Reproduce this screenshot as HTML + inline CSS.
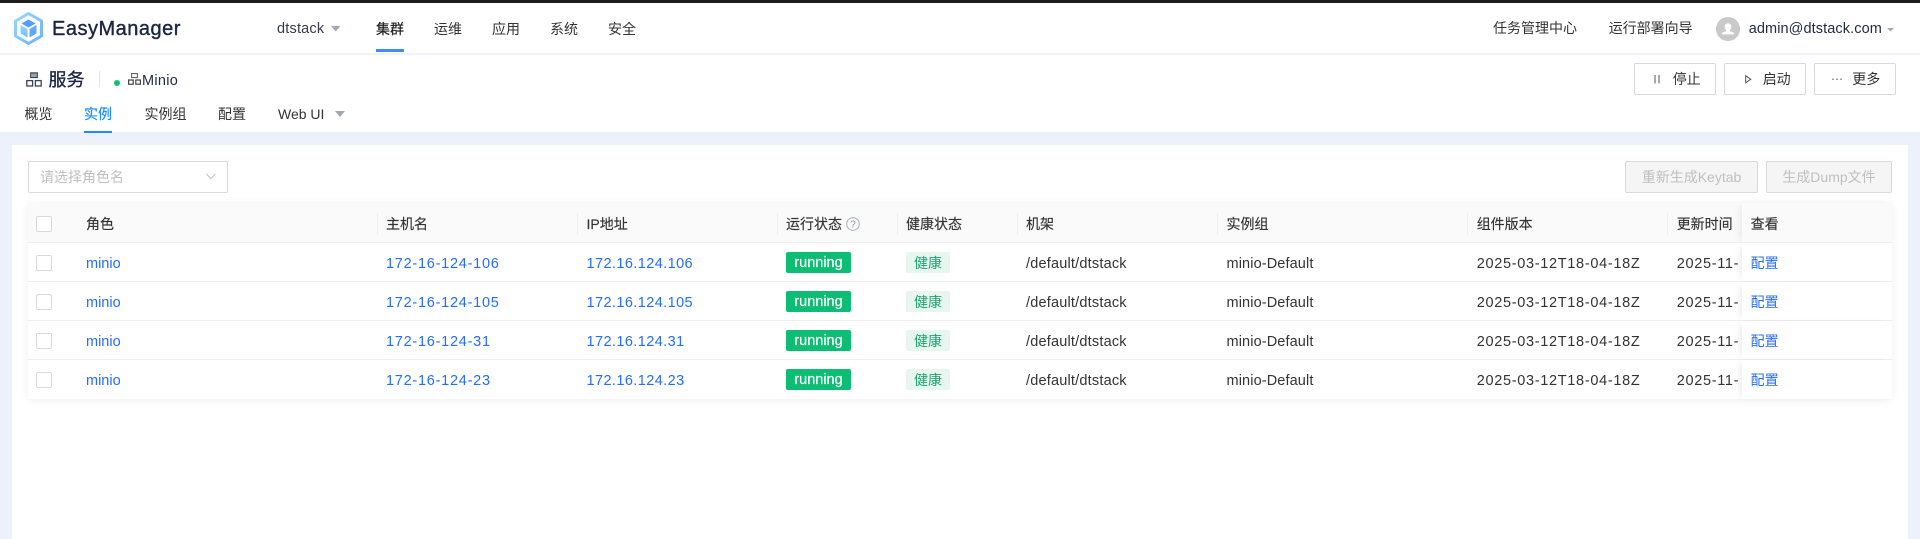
<!DOCTYPE html>
<html lang="zh-CN">
<head>
<meta charset="utf-8">
<title>EasyManager</title>
<style>
*{box-sizing:border-box}
html,body{margin:0;padding:0;width:1920px;height:539px;overflow:hidden;background:#edf1f9;
font-family:"Liberation Sans","Noto Sans CJK SC",sans-serif;font-size:14px;color:#333}
.a{position:absolute;white-space:nowrap}
.t{position:absolute;white-space:nowrap;line-height:20px;height:20px}
svg{position:absolute;display:block;overflow:visible}
.btn{position:absolute;top:63px;width:82px;height:32px;background:#fff;border:1px solid #d9d9d9;border-radius:2px}
.dis{position:absolute;top:161px;height:32px;background:#f5f5f5;border:1px solid #d9d9d9;border-radius:2px;color:#bfbfbf;line-height:30px;text-align:center}
.row{position:absolute;left:28px;width:1864px;height:39px;border-bottom:1px solid #efefef;background:#fff;line-height:40px}
.row>div{position:absolute;top:0;white-space:nowrap}
.row>.lt{top:1px}
.cb{position:absolute;left:8px;width:16px;height:16px;background:#fff;border:1px solid #d9d9d9;border-radius:2px}
.l{color:#246dff}
.role{left:58px;font-size:14.5px}
.host{left:358px;font-size:14.5px;letter-spacing:.74px}
.ip{left:558.5px;font-size:14.5px;letter-spacing:.41px}
.run{left:758px;top:9px!important;width:65px;height:21px;background:#0dbd74;border-radius:2px;color:#fff;text-align:center;line-height:23px;font-size:14.5px;-webkit-text-stroke:.15px #fff}
.hl{left:878px;top:9px!important;width:44px;height:21px;background:#e7f7f0;border-radius:2px;color:#19a56f;text-align:center;line-height:22px}
.rack{left:998px;font-size:14.5px;letter-spacing:.2px}
.grp{left:1198.5px;font-size:14.5px;letter-spacing:.12px}
.ver{left:1448.7px;font-size:14.5px;letter-spacing:.69px}
.time{left:1648.7px;font-size:14.5px;letter-spacing:.69px}
.fix{left:1714px;width:150px;height:38px;background:#fff;box-shadow:-5px 0 7px -3px rgba(0,0,0,.08)}
.fix span{position:absolute;left:8.6px;color:#246dff}
.th{position:absolute;top:203px;line-height:42px;height:40px;color:#333;white-space:nowrap;-webkit-text-stroke:.15px #333}
.dv{position:absolute;top:213px;width:1px;height:22px;background:#efefef}
</style>
</head>
<body>
<!-- top bars -->
<div class="a" style="left:0;top:0;width:1920px;height:3px;background:#1c1c1c"></div>
<div class="a" style="left:0;top:3px;width:1920px;height:50px;background:#fff"></div>
<div class="a" style="left:0;top:53px;width:1920px;height:2px;background:#eef2fb"></div>
<div class="a" style="left:0;top:55px;width:1920px;height:77px;background:#fff"></div>

<!-- logo -->
<svg style="left:0;top:0" width="60" height="55" viewBox="0 0 60 55">
  <defs>
    <linearGradient id="g1" x1="0" y1="0" x2="1" y2="1"><stop offset="0" stop-color="#9ad8ff"/><stop offset="1" stop-color="#6ab0ff"/></linearGradient>
    <linearGradient id="g2" x1="0" y1="0" x2="0" y2="1"><stop offset="0" stop-color="#9bd4ff"/><stop offset="1" stop-color="#70bcff"/></linearGradient>
  </defs>
  <path d="M28.5 13.5 L41.5 21 V36 L28.5 43.5 L15.5 36 V21 Z" fill="#fff" stroke="url(#g1)" stroke-width="3" stroke-linejoin="round"/>
  <path d="M28.5 19.5 L35.5 23.5 L28.5 27.5 L21.5 23.5 Z" fill="#4f9eff"/>
  <path d="M20.5 25 L27.5 29 V37.5 L20.5 33.5 Z" fill="url(#g2)"/>
  <path d="M36.5 25 L29.5 29 V37.5 L36.5 33.5 Z" fill="#5fa9ff"/>
</svg>
<div class="a" style="left:52px;top:16px;line-height:26px;font-size:20px;letter-spacing:.5px;color:#1a2744;-webkit-text-stroke:.4px #1a2744">EasyManager</div>

<!-- nav -->
<div class="t" style="left:277px;top:19px;font-size:14.5px;letter-spacing:.2px;color:#333a4d">dtstack</div>
<svg style="left:331px;top:26px" width="10" height="6"><polygon points="0,0 9.5,0 4.75,5.5" fill="#a4a8b4"/></svg>
<div class="t" style="left:376px;top:19px;color:#222;-webkit-text-stroke:.2px #222">集群</div>
<div class="a" style="left:376px;top:49px;width:28px;height:3px;background:#3d8bff"></div>
<div class="t" style="left:434px;top:19px">运维</div>
<div class="t" style="left:492px;top:19px">应用</div>
<div class="t" style="left:550px;top:19px">系统</div>
<div class="t" style="left:608px;top:19px">安全</div>

<div class="t" style="left:1493px;top:18px">任务管理中心</div>
<div class="t" style="left:1608.7px;top:18px">运行部署向导</div>
<svg style="left:1716px;top:17px" width="24" height="24" viewBox="0 0 24 24">
  <circle cx="12" cy="12" r="12" fill="#c9c9c9"/>
  <path d="M12 6.2c-2 0-3.3 1.5-3.3 3.5 0 1.3.6 2.5 1.5 3.2v1.1l-3.6 1.5c-.5.2-.7.6-.7 1v.9h12.2v-.9c0-.4-.2-.8-.7-1l-3.6-1.5v-1.1c.9-.7 1.5-1.9 1.5-3.2 0-2-1.3-3.5-3.3-3.5z" fill="#fff"/>
</svg>
<div class="t" style="left:1748.7px;top:19px;font-size:14.5px;letter-spacing:.1px;color:#1f2a44">admin@dtstack.com</div>
<svg style="left:1887px;top:28px" width="7" height="4"><polygon points="0,0 7,0 3.5,3.5" fill="#a4a8b4"/></svg>

<!-- subheader -->
<svg style="left:26px;top:72px" width="16" height="15" viewBox="0 0 16 15">
  <path d="M5 1.2H11M5 3H11M5 5H11" stroke="#3a4258" stroke-width="1" fill="none"/>
  <rect x="4.6" y=".8" width="6.8" height="4.8" fill="none" stroke="#3a4258" stroke-width="1"/>
  <rect x=".8" y="8.6" width="5.8" height="5.4" fill="none" stroke="#3a4258" stroke-width="1.3"/>
  <rect x="9.4" y="8.6" width="5.8" height="5.4" fill="none" stroke="#3a4258" stroke-width="1.3"/>
</svg>
<div class="a" style="left:48.5px;top:67px;line-height:26px;font-size:18px;color:#1a2744;-webkit-text-stroke:.35px #1a2744">服务</div>
<div class="a" style="left:98.5px;top:71px;width:1.5px;height:16px;background:#dfe3ec"></div>
<div class="a" style="left:114px;top:79.5px;width:6px;height:6px;border-radius:50%;background:#12c071"></div>
<svg style="left:128px;top:73px" width="13" height="12" viewBox="0 0 13 12">
  <rect x="3.6" y=".6" width="5.8" height="4" fill="none" stroke="#555" stroke-width="1"/>
  <rect x=".6" y="7" width="4.6" height="4.2" fill="none" stroke="#444" stroke-width="1.2"/>
  <rect x="7.8" y="7" width="4.6" height="4.2" fill="none" stroke="#444" stroke-width="1.2"/>
</svg>
<div class="t" style="left:142px;top:71px;font-size:14.5px;letter-spacing:.28px;color:#1f2a44">Minio</div>

<div class="t" style="left:24.5px;top:104px">概览</div>
<div class="t" style="left:84px;top:104px;color:#1c8cff;-webkit-text-stroke:.2px #1c8cff">实例</div>
<div class="a" style="left:84px;top:131px;width:28px;height:2px;background:#1c8cff"></div>
<div class="t" style="left:144.5px;top:104px">实例组</div>
<div class="t" style="left:218px;top:104px">配置</div>
<div class="t" style="left:278px;top:104px">Web UI</div>
<svg style="left:335px;top:111px" width="10" height="6"><polygon points="0,0 10,0 5,6" fill="#a4a8b4"/></svg>

<!-- action buttons -->
<div class="btn" style="left:1634px"></div>
<svg style="left:1654px;top:74.5px" width="6" height="9"><path d="M1 0V8.5M5 0V8.5" stroke="#555" stroke-width="1"/></svg>
<div class="t" style="left:1672.7px;top:69px">停止</div>
<div class="btn" style="left:1724px"></div>
<svg style="left:1745px;top:74.5px" width="7" height="9"><path d="M.7.7 5.8 4.2.7 7.8Z" fill="none" stroke="#555" stroke-width="1"/></svg>
<div class="t" style="left:1762.7px;top:69px">启动</div>
<div class="btn" style="left:1814px"></div>
<svg style="left:1832px;top:78px" width="11" height="3"><circle cx="1" cy="1.2" r=".8" fill="#777"/><circle cx="5" cy="1.2" r=".8" fill="#777"/><circle cx="9" cy="1.2" r=".8" fill="#777"/></svg>
<div class="t" style="left:1852.3px;top:69px">更多</div>

<!-- panel -->
<div class="a" style="left:12px;top:145px;width:1896px;height:394px;background:#fff"></div>

<div class="a" style="left:28px;top:161px;width:200px;height:32px;background:#fff;border:1px solid #d9d9d9;border-radius:2px"></div>
<div class="t" style="left:40px;top:167px;color:#bfbfbf">请选择角色名</div>
<svg style="left:206px;top:173px" width="10" height="7"><path d="M.5.8 4.8 5.8 9.2.8" fill="none" stroke="#bfbfbf" stroke-width="1"/></svg>

<div class="dis" style="left:1625px;width:133px">重新生成Keytab</div>
<div class="dis" style="left:1766px;width:126px">生成Dump文件</div>

<!-- table -->
<div class="a" style="left:28px;top:203px;width:1864px;height:196px;background:#fff;box-shadow:0 1px 8px rgba(0,0,0,.07)"></div>
<div class="a" style="left:28px;top:203px;width:1864px;height:40px;background:#fafafa;border-bottom:1px solid #efefef"></div>
<div class="cb" style="left:36px;top:216px"></div>
<div class="th" style="left:86px">角色</div>
<div class="dv" style="left:377px"></div>
<div class="th" style="left:386px">主机名</div>
<div class="dv" style="left:577px"></div>
<div class="th" style="left:586.5px">IP地址</div>
<div class="dv" style="left:777px"></div>
<div class="th" style="left:786px">运行状态</div>
<svg style="left:846px;top:217px" width="14" height="14" viewBox="0 0 14 14">
  <circle cx="7" cy="7" r="6.3" fill="none" stroke="#a7adbb" stroke-width="1"/>
  <text x="7" y="10.6" text-anchor="middle" font-size="10" fill="#8a91a3" font-family="Liberation Sans, sans-serif">?</text>
</svg>
<div class="dv" style="left:897px"></div>
<div class="th" style="left:906px">健康状态</div>
<div class="dv" style="left:1017px"></div>
<div class="th" style="left:1026px">机架</div>
<div class="dv" style="left:1217px"></div>
<div class="th" style="left:1226.5px">实例组</div>
<div class="dv" style="left:1467px"></div>
<div class="th" style="left:1476.7px">组件版本</div>
<div class="dv" style="left:1667px"></div>
<div class="th" style="left:1676.7px">更新时间</div>

<div class="row" style="top:243px">
  <div class="cb" style="top:12px"></div>
  <div class="lt role l">minio</div><div class="lt host l">172-16-124-106</div><div class="lt ip l">172.16.124.106</div>
  <div class="run">running</div><div class="hl">健康</div>
  <div class="lt rack">/default/dtstack</div><div class="lt grp">minio-Default</div>
  <div class="lt ver">2025-03-12T18-04-18Z</div><div class="lt time">2025-11-</div>
  <div class="fix"><span>配置</span></div>
</div>
<div class="row" style="top:282px">
  <div class="cb" style="top:12px"></div>
  <div class="lt role l">minio</div><div class="lt host l">172-16-124-105</div><div class="lt ip l">172.16.124.105</div>
  <div class="run">running</div><div class="hl">健康</div>
  <div class="lt rack">/default/dtstack</div><div class="lt grp">minio-Default</div>
  <div class="lt ver">2025-03-12T18-04-18Z</div><div class="lt time">2025-11-</div>
  <div class="fix"><span>配置</span></div>
</div>
<div class="row" style="top:321px">
  <div class="cb" style="top:12px"></div>
  <div class="lt role l">minio</div><div class="lt host l">172-16-124-31</div><div class="lt ip l">172.16.124.31</div>
  <div class="run">running</div><div class="hl">健康</div>
  <div class="lt rack">/default/dtstack</div><div class="lt grp">minio-Default</div>
  <div class="lt ver">2025-03-12T18-04-18Z</div><div class="lt time">2025-11-</div>
  <div class="fix"><span>配置</span></div>
</div>
<div class="row" style="top:360px;border-bottom:0">
  <div class="cb" style="top:12px"></div>
  <div class="lt role l">minio</div><div class="lt host l">172-16-124-23</div><div class="lt ip l">172.16.124.23</div>
  <div class="run">running</div><div class="hl">健康</div>
  <div class="lt rack">/default/dtstack</div><div class="lt grp">minio-Default</div>
  <div class="lt ver">2025-03-12T18-04-18Z</div><div class="lt time">2025-11-</div>
  <div class="fix" style="height:39px"><span>配置</span></div>
</div>

<!-- fixed column header -->
<div class="a" style="left:1742px;top:203px;width:150px;height:40px;background:#fafafa;border-bottom:1px solid #efefef;box-shadow:-5px 0 7px -3px rgba(0,0,0,.08)"></div>
<div class="th" style="left:1750.6px">查看</div>
</body>
</html>
